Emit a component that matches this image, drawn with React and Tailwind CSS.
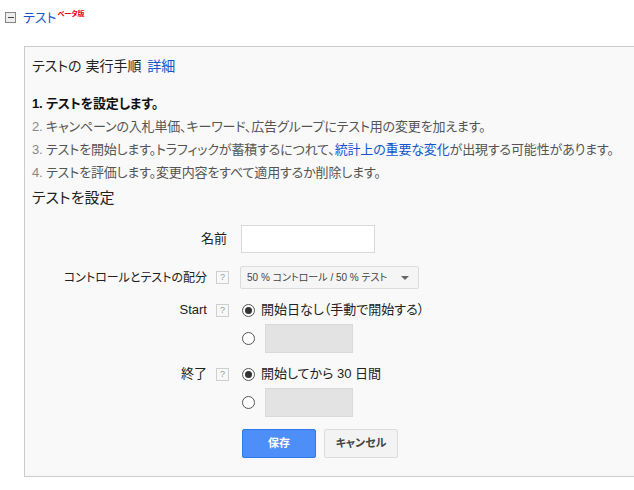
import React from 'react';

const font = { fontFamily: '"Liberation Sans", "Noto Sans CJK JP", sans-serif' };

function Help() {
    return (
        <span className="inline-flex items-center justify-center w-[13px] h-[13px] border border-[#cfcfcf] bg-[#f8f8f8] text-[9px] leading-none text-[#999]">
            ?
        </span>
    );
}

function Radio({ checked }) {
    return (
        <span className="inline-flex items-center justify-center w-[13px] h-[13px] rounded-full border border-[#555] bg-white shrink-0">
            {checked && <span className="w-[7px] h-[7px] rounded-full bg-[#333]" />}
        </span>
    );
}

function DateChoice({ label }) {
    return (
        <div className="ml-[13px] flex flex-col gap-[3px]">
            <div className="h-[22px] flex items-center gap-[6px]">
                <Radio checked />
                <span>{label}</span>
            </div>
            <div className="h-[29px] flex items-center gap-[10px]">
                <Radio />
                <div className="w-[88px] h-[29px] border border-[#d9d9d9] bg-[#e3e3e3]" />
            </div>
        </div>
    );
}

export default function App() {
    return (
        <div className="bg-white w-[634px] h-[490px] overflow-hidden text-[#222] [font-feature-settings:'palt']" style={font}>
            {/* header */}
            <div className="flex items-center pt-[10px] pl-[5px] h-[24px]">
                <span className="w-[11px] h-[11px] border border-[#888] bg-[#eee] flex items-center justify-center">
                    <span className="w-[6px] h-[1px] bg-[#444]" />
                </span>
                <span className="ml-[7px] text-[13px] text-[#1155cc] leading-none">テスト</span>
                <span className="ml-[1px] -mt-[7px] text-[7px] font-bold text-[#e00] leading-none">ベータ版</span>
            </div>

            {/* panel */}
            <div className="ml-[24px] mt-[22px] border-l border-t border-b border-[#ccc] bg-[#f9f9f9] pl-[7px] pt-[9px] pb-[18px]">
                <div className="text-[14px] leading-[20px] text-[#222]">
                    テストの 実行手順 <span className="ml-[2px] text-[#1155cc]">詳細</span>
                </div>

                <div className="mt-[16px] text-[13px] leading-[23px] tracking-[-0.15px]">
                    <div className="font-bold text-[#111]">1. テストを設定します。</div>
                    <div className="text-[#555]"><span className="text-[#888]">2.</span> キャンペーンの入札単価、キーワード、広告グループにテスト用の変更を加えます。</div>
                    <div className="text-[#555]"><span className="text-[#888]">3.</span> テストを開始します。トラフィックが蓄積するにつれて、<span className="text-[#1155cc]">統計上の重要な変化</span>が出現する可能性があります。</div>
                    <div className="text-[#555]"><span className="text-[#888]">4.</span> テストを評価します。変更内容をすべて適用するか削除します。</div>
                </div>

                <div className="mt-[4px] text-[15px] leading-[20px] text-[#222]">テストを設定</div>

                <div className="-ml-[7px] text-[13px] text-[#222]">
                    {/* name */}
                    <div className="flex items-center mt-[17px] h-[28px]">
                        <div className="w-[204px] shrink-0 text-right pr-[2px]">名前</div>
                        <div className="ml-[12px] w-[134px] h-[28px] border border-[#d9d9d9] bg-white" />
                    </div>

                    {/* split */}
                    <div className="flex items-center mt-[13px] h-[23px]">
                        <div className="w-[204px] shrink-0 flex items-center justify-end gap-[9px]">
                            <span className="text-[12px]">コントロールとテストの配分</span>
                            <Help />
                        </div>
                        <div className="ml-[11px] w-[179px] h-[23px] border border-[#dcdcdc] bg-[#f5f5f5] rounded-[2px] flex items-center justify-between pl-[6px] pr-[9px]">
                            <span className="text-[10px] text-[#444]">50 % コントロール / 50 % テスト</span>
                            <span className="w-0 h-0 border-l-[4px] border-r-[4px] border-t-[4px] border-l-transparent border-r-transparent border-t-[#666]" />
                        </div>
                    </div>

                    {/* start */}
                    <div className="flex mt-[10px]">
                        <div className="w-[204px] shrink-0 h-[22px] flex items-center justify-end gap-[9px]">
                            <span>Start</span>
                            <Help />
                        </div>
                        <DateChoice label="開始日なし（手動で開始する）" />
                    </div>

                    {/* end */}
                    <div className="flex mt-[10px]">
                        <div className="w-[204px] shrink-0 h-[22px] flex items-center justify-end gap-[9px]">
                            <span>終了</span>
                            <Help />
                        </div>
                        <DateChoice label="開始してから 30 日間" />
                    </div>

                    {/* buttons */}
                    <div className="flex mt-[12px] ml-[217px] gap-[8px]">
                        <button className="w-[74px] h-[29px] rounded-[2px] border border-[#3079ed] bg-[#4d8ef8] text-white text-[11px] font-bold">
                            保存
                        </button>
                        <button className="w-[74px] h-[29px] rounded-[2px] border border-[#dcdcdc] bg-[#f3f3f3] text-[#444] text-[11px] font-bold">
                            キャンセル
                        </button>
                    </div>
                </div>
            </div>
        </div>
    );
}
